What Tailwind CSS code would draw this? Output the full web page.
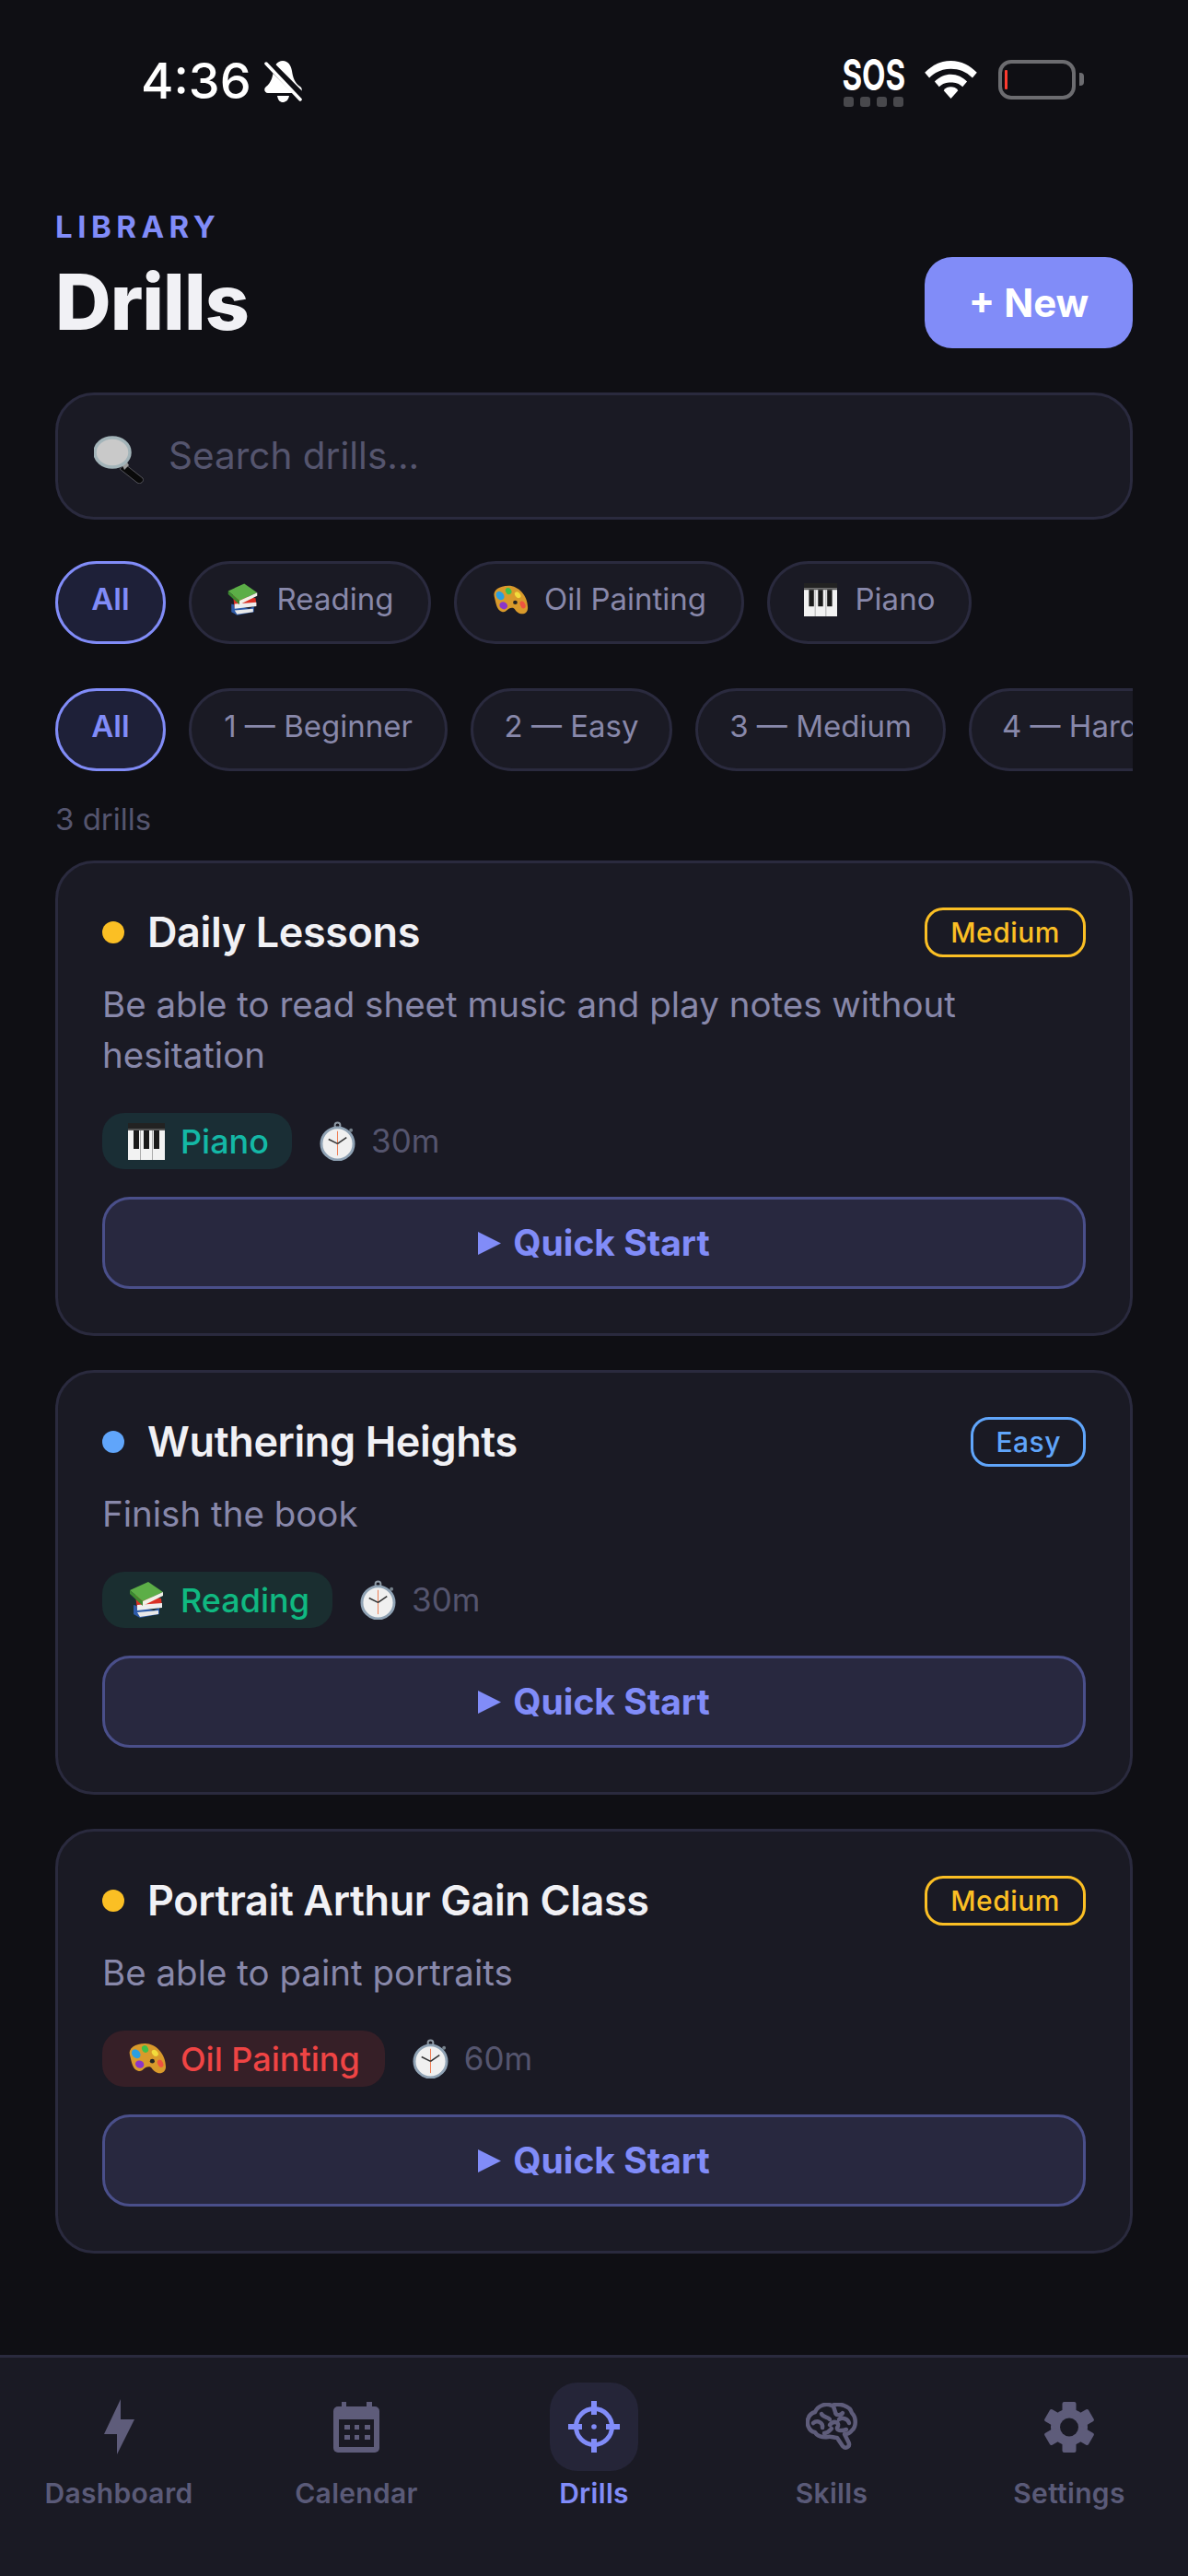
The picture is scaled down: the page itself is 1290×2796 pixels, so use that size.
<!DOCTYPE html>
<html lang="en">
<head>
    <meta charset="UTF-8">
    <meta name="viewport" content="width=device-width, initial-scale=1.0">
    <title>Drills</title>
    <script src="https://cdn.jsdelivr.net/npm/@tailwindcss/browser@4"></script>
</head>
<body class="bg-[#0f0f14] font-['Inter',sans-serif] w-[1290px] h-[2796px] overflow-hidden flex flex-col">
    <!-- icon defs -->
    <svg class="hidden">
        <symbol id="books" viewBox="0 0 40 40">
            <path d="M6 25 L28 31 L34 28 L34 35 L13 39 L6 35Z" fill="#2c5aa8"/>
            <path d="M10 33 L33 31 L33 35 L13 38Z" fill="#e8e8e8"/>
            <path d="M8 14 L36 18 L37 27 L10 30Z" fill="#d93025"/>
            <path d="M10 25 L37 23 L37 28 L10 31Z" fill="#eee"/>
            <path d="M2 9 L22 0 L38 11 L16 21Z" fill="#5cae47"/>
            <path d="M2 9 L16 21 L16 26 L2 13Z" fill="#3d8a30"/>
            <path d="M16 21 L38 11 L38 15 L16 26Z" fill="#f1f1e8"/>
        </symbol>
        <symbol id="palette" viewBox="0 0 44 40" preserveAspectRatio="none">
            <path d="M3 15 C1 7 9 1 20 1 C32 1 43 14 43 30 C43 38 36 40 31 36 C27 33 28 30 24 30 C18 30 18 37 12 35 C6 33 5 24 3 15Z" fill="#d99a2b"/>
            <ellipse cx="10" cy="14" rx="4.5" ry="6" transform="rotate(-30 10 14)" fill="#2b9fe0"/>
            <ellipse cx="20" cy="8" rx="3.5" ry="4.5" transform="rotate(-20 20 8)" fill="#3fc04a"/>
            <ellipse cx="31" cy="13" rx="3" ry="4.5" transform="rotate(-35 31 13)" fill="#f2dc3c"/>
            <ellipse cx="14" cy="27" rx="4.5" ry="5" transform="rotate(-50 14 27)" fill="#8a35c9"/>
            <ellipse cx="37" cy="26" rx="3" ry="5" transform="rotate(-20 37 26)" fill="#ee5340"/>
            <circle cx="28" cy="23" r="2.6" fill="#222"/>
        </symbol>
        <symbol id="piano" viewBox="0 0 40 40">
            <rect width="40" height="40" fill="#f2f2f2"/>
            <rect width="40" height="6" fill="#222"/>
            <rect y="6" width="40" height="2" fill="#555"/>
            <rect x="13" y="8" width="1" height="32" fill="#aaa"/>
            <rect x="26" y="8" width="1" height="32" fill="#aaa"/>
            <rect x="6" y="8" width="6" height="20" fill="#1a1a1a"/>
            <rect x="17" y="8" width="6" height="20" fill="#1a1a1a"/>
            <rect x="28" y="8" width="6" height="20" fill="#1a1a1a"/>
        </symbol>
        <symbol id="timer" viewBox="0 0 40 44">
            <circle cx="20" cy="4.5" r="3" fill="none" stroke="#8d98a3" stroke-width="2"/>
            <rect x="17.5" y="6" width="5" height="4" fill="#8d98a3"/>
            <circle cx="35" cy="10" r="2" fill="#77828c"/>
            <circle cx="20" cy="25" r="18" fill="#f0f0f0" stroke="#8fa2b4" stroke-width="3"/>
            <path d="M20 11 V38" stroke="#ef7a50" stroke-width="1"/>
            <path d="M20 25 L10 20 M20 25 L30 18" stroke="#333" stroke-width="1.6"/>
        </symbol>
        <symbol id="lens" viewBox="0 0 54 52">
            <path d="M34 31 L53 46 C55 50 50 53 47 51 L28 36Z" fill="#0a0a0a" stroke="#55555c" stroke-width="1"/>
            <path d="M30 30 L35 27 L38 32 L33 37Z" fill="#9a9a9a"/>
            <ellipse cx="20" cy="18" rx="19" ry="16" fill="#c9c9c9" stroke="#a3b4b9" stroke-width="3.5"/>
        </symbol>
    </svg>

    <!-- status bar -->
    <div class="h-[178px] shrink-0 relative text-white">
        <div class="absolute left-[153px] top-[55px] flex items-center gap-[14px]">
            <span class="text-[54px] leading-[66px] font-medium">4:36</span>
            <svg class="w-[41px] h-[45px]" viewBox="0 0 41 45" fill="white">
                <path d="M20 0 C26 0 29 5 30 11 C31 18 33 24 39 28 C42 30 41 35 37 35 L4 35 C0 35 -1 30 2 28 C7 24 9 18 10 11 C11 5 14 0 20 0Z"/>
                <path d="M14 38 H27 C26 43 23 45 20 45 C17 45 15 43 14 38Z"/>
                <path d="M3 1 L44 42" stroke="#0f0f14" stroke-width="9"/>
                <path d="M2 3 L39 42" stroke="white" stroke-width="3.5" stroke-linecap="round"/>
            </svg>
        </div>
        <div class="absolute left-[914px] top-[60px] w-[69px] flex flex-col items-center">
            <span class="text-[46px] leading-[42px] font-bold whitespace-nowrap scale-x-[0.72]">SOS</span>
            <div class="flex gap-[7px] mt-[3px]">
                <span class="w-[11px] h-[11px] rounded-[3px] bg-[#48484c]"></span>
                <span class="w-[11px] h-[11px] rounded-[3px] bg-[#48484c]"></span>
                <span class="w-[11px] h-[11px] rounded-[3px] bg-[#48484c]"></span>
                <span class="w-[11px] h-[11px] rounded-[3px] bg-[#48484c]"></span>
            </div>
        </div>
        <svg class="absolute left-[1004px] top-[66px] w-[57px] h-[41px]" viewBox="0 0 58 42" fill="white">
            <path d="M29 0 C41 0 50 5 58 13 L53 19 C46 12 38 9 29 9 C20 9 12 12 5 19 L0 13 C8 5 17 0 29 0Z"/>
            <path d="M29 15 C36 15 42 18 47 23 L42 29 C38 25 34 24 29 24 C24 24 20 25 16 29 L11 23 C16 18 22 15 29 15Z"/>
            <path d="M29 29 C32 29 35 30 37 33 L29 42 L21 33 C23 30 26 29 29 29Z"/>
        </svg>
        <div class="absolute left-[1084px] top-[65px] w-[84px] h-[43px] rounded-[14px] border-[4px] border-[#6c6c70] flex items-center pl-[3px]">
            <div class="w-[3px] h-[21px] bg-[#ff3b30] rounded-[1px]"></div>
        </div>
        <div class="absolute left-[1172px] top-[79px] w-[5px] h-[14px] rounded-r-[4px] bg-[#6c6c70]"></div>
    </div>

    <main class="flex-1 px-[60px]">
        <!-- header -->
        <div class="flex items-end justify-between h-[200px]">
            <div class="-mb-[2px]">
                <div class="text-[33px] leading-[48px] font-bold tracking-[5.5px] text-[#818cf8] mb-[6px]">LIBRARY</div>
                <h1 class="text-[84px] leading-[104px] font-extrabold tracking-[-1px] text-[#f1f1f5]">Drills</h1>
            </div>
            <button class="w-[226px] h-[99px] rounded-[30px] bg-[#818cf8] text-white text-[42px] font-bold">+ New</button>
        </div>

        <!-- search -->
        <div class="mt-[48px] h-[138px] rounded-[42px] border-[3px] border-[#2a2a3e] bg-[#1a1a24] flex items-center pl-[39px] gap-[27px]">
            <svg class="w-[54px] h-[52px] mt-[8px]"><use href="#lens"/></svg>
            <span class="text-[40.5px] text-[#55556e]">Search drills...</span>
        </div>

        <!-- category chips -->
        <div class="mt-[45px] flex gap-[25px] text-[33px]">
            <button class="w-[120px] h-[90px] pb-[6px] rounded-full border-[3px] border-[#818cf8] bg-[#1e2038] text-[#818cf8] font-semibold">All</button>
            <button class="w-[263px] h-[90px] pb-[6px] rounded-full border-[3px] border-[#2a2a3e] bg-[#1a1a24] text-[#8888aa] flex items-center justify-center gap-[20px]"><svg class="w-[35px] h-[36px]"><use href="#books"/></svg>Reading</button>
            <button class="w-[315px] h-[90px] pb-[6px] rounded-full border-[3px] border-[#2a2a3e] bg-[#1a1a24] text-[#8888aa] flex items-center justify-center gap-[17px]"><svg class="w-[40px] h-[33px]"><use href="#palette"/></svg>Oil Painting</button>
            <button class="w-[222px] h-[90px] pb-[6px] rounded-full border-[3px] border-[#2a2a3e] bg-[#1a1a24] text-[#8888aa] flex items-center justify-center gap-[20px]"><svg class="w-[36px] h-[36px]"><use href="#piano"/></svg>Piano</button>
        </div>

        <!-- difficulty chips -->
        <div class="mt-[48px] flex gap-[25px] text-[33px] overflow-hidden">
            <button class="w-[120px] h-[90px] pb-[6px] shrink-0 rounded-full border-[3px] border-[#818cf8] bg-[#1e2038] text-[#818cf8] font-semibold">All</button>
            <button class="w-[281px] h-[90px] pb-[6px] shrink-0 rounded-full border-[3px] border-[#2a2a3e] bg-[#1a1a24] text-[#8888aa]">1 — Beginner</button>
            <button class="w-[219px] h-[90px] pb-[6px] shrink-0 rounded-full border-[3px] border-[#2a2a3e] bg-[#1a1a24] text-[#8888aa]">2 — Easy</button>
            <button class="w-[272px] h-[90px] pb-[6px] shrink-0 rounded-full border-[3px] border-[#2a2a3e] bg-[#1a1a24] text-[#8888aa]">3 — Medium</button>
            <button class="w-[220px] h-[90px] pb-[6px] shrink-0 rounded-full border-[3px] border-[#2a2a3e] bg-[#1a1a24] text-[#8888aa]">4 — Hard</button>
        </div>

        <div class="mt-[32px] text-[33px] leading-[40px] text-[#55556e]">3 drills</div>

        <!-- cards -->
        <div class="mt-[25px] flex flex-col gap-[37px]">
            <article class="rounded-[42px] border-[3px] border-[#2a2a3e] bg-[#1a1a24] px-[48px] pt-[48px] pb-[48px]">
                <div class="flex items-center justify-between h-[54px]">
                    <div class="flex items-center gap-[25px]">
                        <span class="w-[24px] h-[24px] rounded-full bg-[#fbbf24]"></span>
                        <h2 class="text-[45px] font-semibold tracking-[-0.4px] text-[#f1f1f5]">Daily Lessons</h2>
                    </div>
                    <span class="h-[54px] px-[25px] rounded-[20px] border-[3px] border-[#fbbf24] text-[#fbbf24] text-[30px] font-medium tracking-[0.5px] flex items-center">Medium</span>
                </div>
                <p class="mt-[24px] text-[38.5px] leading-[55px] text-[#8888aa]">Be able to read sheet music and play notes without hesitation</p>
                <div class="mt-[35px] flex items-center gap-[30px]">
                    <span class="h-[61px] pl-[28px] pr-[25px] rounded-[24px] bg-[#1a2e35] text-[#14b8a6] text-[36px] font-medium flex items-center gap-[17px]"><svg class="w-[40px] h-[40px]"><use href="#piano"/></svg>Piano</span>
                    <span class="flex items-center gap-[17px] text-[35px] text-[#55556e]"><svg class="w-[39px] h-[43px]"><use href="#timer"/></svg>30m</span>
                </div>
                <button class="mt-[30px] w-full h-[100px] rounded-[30px] border-[3px] border-[#4a4f8a] bg-[#28283f] text-[#818cf8] text-[39px] font-bold flex items-center justify-center gap-[13px]"><svg class="w-[25px] h-[25px]" viewBox="0 0 25 25" fill="#818cf8"><path d="M0 0 L25 12.5 L0 25Z"/></svg>Quick Start</button>
            </article>

            <article class="rounded-[42px] border-[3px] border-[#2a2a3e] bg-[#1a1a24] px-[48px] pt-[48px] pb-[48px]">
                <div class="flex items-center justify-between h-[54px]">
                    <div class="flex items-center gap-[25px]">
                        <span class="w-[24px] h-[24px] rounded-full bg-[#60a5fa]"></span>
                        <h2 class="text-[45px] font-semibold tracking-[-0.4px] text-[#f1f1f5]">Wuthering Heights</h2>
                    </div>
                    <span class="h-[54px] px-[24px] rounded-[20px] border-[3px] border-[#60a5fa] text-[#60a5fa] text-[30px] font-medium tracking-[0.5px] flex items-center">Easy</span>
                </div>
                <p class="mt-[24px] text-[38.5px] leading-[55px] text-[#8888aa]">Finish the book</p>
                <div class="mt-[35px] flex items-center gap-[30px]">
                    <span class="h-[61px] pl-[28px] pr-[25px] rounded-[24px] bg-[#1a2e30] text-[#10b981] text-[36px] font-medium flex items-center gap-[17px]"><svg class="w-[40px] h-[40px]"><use href="#books"/></svg>Reading</span>
                    <span class="flex items-center gap-[17px] text-[35px] text-[#55556e]"><svg class="w-[39px] h-[43px]"><use href="#timer"/></svg>30m</span>
                </div>
                <button class="mt-[30px] w-full h-[100px] rounded-[30px] border-[3px] border-[#4a4f8a] bg-[#28283f] text-[#818cf8] text-[39px] font-bold flex items-center justify-center gap-[13px]"><svg class="w-[25px] h-[25px]" viewBox="0 0 25 25" fill="#818cf8"><path d="M0 0 L25 12.5 L0 25Z"/></svg>Quick Start</button>
            </article>

            <article class="rounded-[42px] border-[3px] border-[#2a2a3e] bg-[#1a1a24] px-[48px] pt-[48px] pb-[48px]">
                <div class="flex items-center justify-between h-[54px]">
                    <div class="flex items-center gap-[25px]">
                        <span class="w-[24px] h-[24px] rounded-full bg-[#fbbf24]"></span>
                        <h2 class="text-[45px] font-semibold tracking-[-0.4px] text-[#f1f1f5]">Portrait Arthur Gain Class</h2>
                    </div>
                    <span class="h-[54px] px-[25px] rounded-[20px] border-[3px] border-[#fbbf24] text-[#fbbf24] text-[30px] font-medium tracking-[0.5px] flex items-center">Medium</span>
                </div>
                <p class="mt-[24px] text-[38.5px] leading-[55px] text-[#8888aa]">Be able to paint portraits</p>
                <div class="mt-[35px] flex items-center gap-[30px]">
                    <span class="h-[61px] px-[27px] rounded-[24px] bg-[#361f27] text-[#ef4444] text-[36px] font-medium flex items-center gap-[15px]"><svg class="w-[43px] h-[35px]"><use href="#palette"/></svg>Oil Painting</span>
                    <span class="flex items-center gap-[17px] text-[35px] text-[#55556e]"><svg class="w-[39px] h-[43px]"><use href="#timer"/></svg>60m</span>
                </div>
                <button class="mt-[30px] w-full h-[100px] rounded-[30px] border-[3px] border-[#4a4f8a] bg-[#28283f] text-[#818cf8] text-[39px] font-bold flex items-center justify-center gap-[13px]"><svg class="w-[25px] h-[25px]" viewBox="0 0 25 25" fill="#818cf8"><path d="M0 0 L25 12.5 L0 25Z"/></svg>Quick Start</button>
            </article>
        </div>
    </main>

    <!-- bottom nav -->
    <nav class="h-[240px] shrink-0 border-t-[3px] border-[#2a2a3e] bg-[#1a1a24] grid grid-cols-5 text-[30px] font-semibold tracking-[0.3px] text-[#5a5a78]">
        <a class="flex flex-col items-center pt-[27px]">
            <span class="w-[96px] h-[96px] flex items-center justify-center">
                <svg class="w-[33px] h-[60px]" viewBox="0 0 33 60" fill="#5e5c7a"><path d="M18 0 L0 38 L14 38 L14 60 L33 22 L18 22Z"/></svg>
            </span>
            <span class="mt-[2px]">Dashboard</span>
        </a>
        <a class="flex flex-col items-center pt-[27px]">
            <span class="w-[96px] h-[96px] flex items-center justify-center">
                <svg class="w-[50px] h-[55px]" viewBox="0 0 50 55" fill="#5e5c7a"><rect y="5" width="50" height="50" rx="5"/><rect x="9" y="0" width="5" height="10"/><rect x="36" y="0" width="6" height="10"/><rect x="6" y="19" width="38" height="30" fill="#1a1a24"/><rect x="12" y="25" width="6" height="5"/><rect x="23" y="25" width="5" height="5"/><rect x="34" y="25" width="6" height="5"/><rect x="12" y="36" width="6" height="5"/><rect x="23" y="36" width="5" height="5"/><rect x="34" y="36" width="6" height="5"/></svg>
            </span>
            <span class="mt-[2px]">Calendar</span>
        </a>
        <a class="flex flex-col items-center pt-[27px] text-[#818cf8]">
            <span class="w-[96px] h-[96px] rounded-[30px] bg-[#252538] flex items-center justify-center">
                <svg class="w-[56px] h-[56px]" viewBox="0 0 56 56" fill="none" stroke="#818cf8"><circle cx="28" cy="28" r="19.5" stroke-width="5"/><path d="M28 0V15M28 41V56M0 28H15M41 28H56" stroke-width="6"/><circle cx="28" cy="28" r="2.8" fill="#818cf8" stroke="none"/></svg>
            </span>
            <span class="mt-[2px]">Drills</span>
        </a>
        <a class="flex flex-col items-center pt-[27px]">
            <span class="w-[96px] h-[96px] flex items-center justify-center">
                <svg class="w-[56px] h-[52px]" viewBox="0 0 56 52" fill="none" stroke="#5e5c7a" stroke-width="4.5" stroke-linecap="round" stroke-linejoin="round"><path d="M10 10 C13 3 22 0 28 3 C36 0 48 3 50 11 C55 16 55 26 50 30 C48 33 45 34 42 34 L46 42 C49 47 44 51 40 47 L34 38 C30 38 27 36 24 37 C18 38 12 36 10 32 C3 31 0 22 3 16 C4 13 7 11 10 10Z"/><path d="M17 12 C19 16 24 15 26 18 M8 22 C13 18 19 22 18 27 M30 4 L32 10 C32 14 38 14 40 11 M26 24 C31 18 38 22 34 27 C33 30 38 31 44 29 M36 18 C40 15 46 18 47 22 M20 33 C24 33 26 30 28 28"/></svg>
            </span>
            <span class="mt-[2px]">Skills</span>
        </a>
        <a class="flex flex-col items-center pt-[27px]">
            <span class="w-[96px] h-[96px] flex items-center justify-center">
                <svg class="w-[54px] h-[55px]" viewBox="0 0 54 55" fill="#5e5c7a"><circle cx="27" cy="27.5" r="20"/><rect x="19.5" y="0" width="15" height="55" rx="2"/><rect x="19.5" y="0" width="15" height="55" rx="2" transform="rotate(60 27 27.5)"/><rect x="19.5" y="0" width="15" height="55" rx="2" transform="rotate(120 27 27.5)"/><circle cx="27" cy="27.5" r="10" fill="#1a1a24"/></svg>
            </span>
            <span class="mt-[2px]">Settings</span>
        </a>
    </nav>
</body>
</html>
